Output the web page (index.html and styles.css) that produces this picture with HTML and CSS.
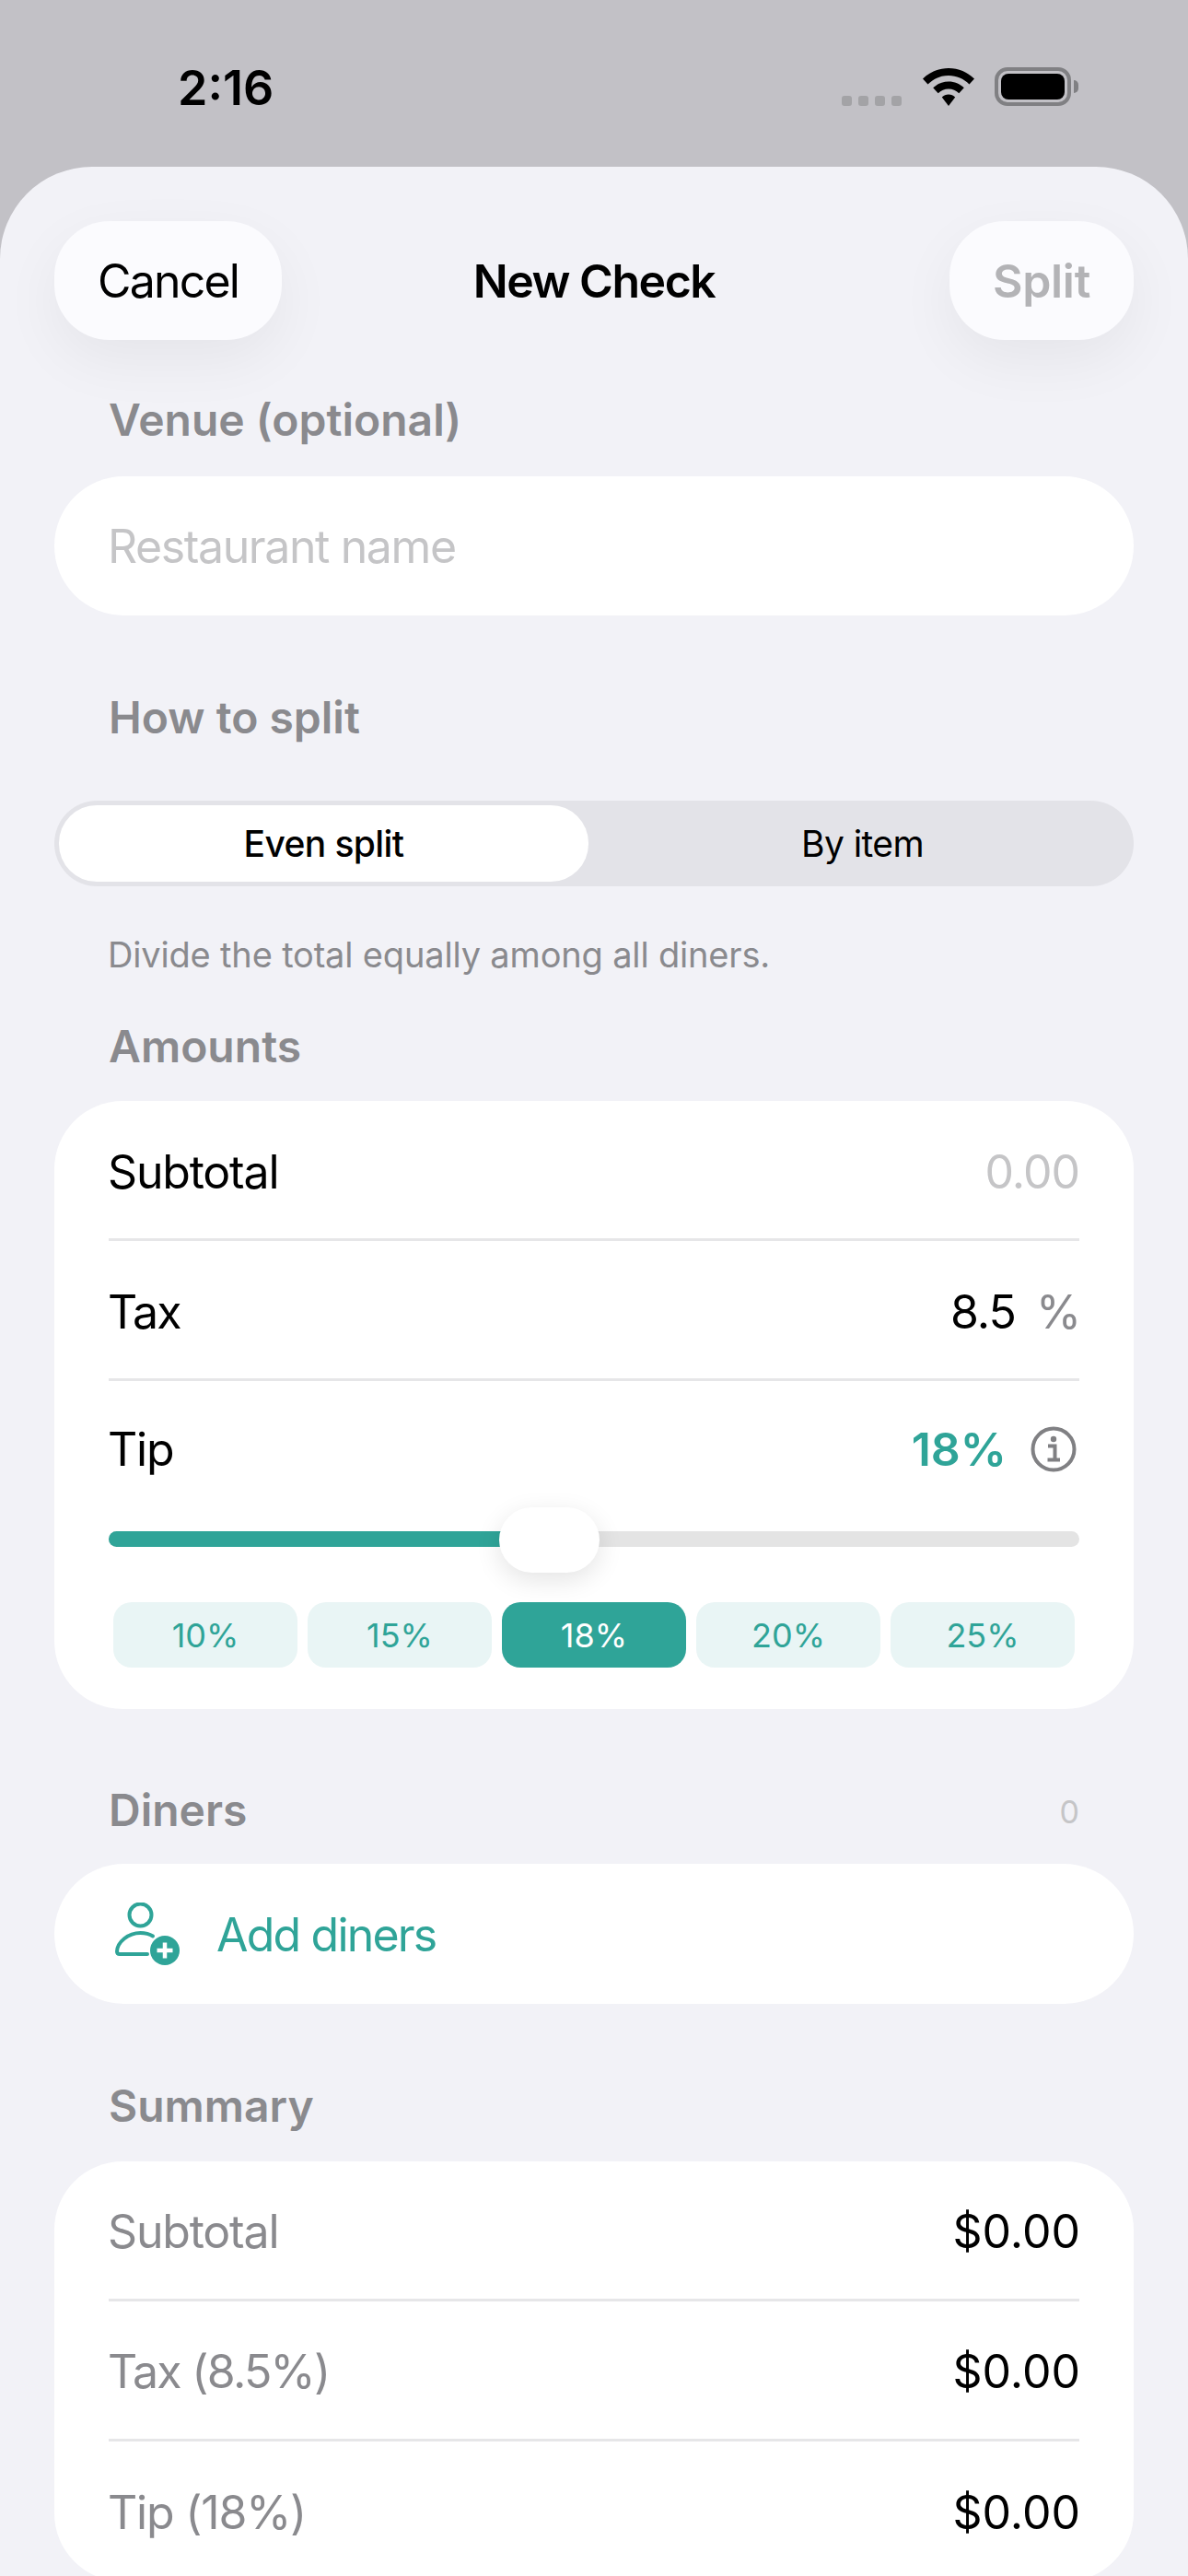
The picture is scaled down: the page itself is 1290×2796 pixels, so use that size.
FILE: index.html
```html
<!DOCTYPE html>
<html lang="en">
<head>
  <meta charset="UTF-8">
  <title>New Check</title>
  <link rel="stylesheet" href="styles.css">
</head>
<body>
<div class="status-bar">
  <div class="time">2:16</div>
  <div class="status-icons">
    <div class="signal"><span></span><span></span><span></span><span></span></div>
    <svg class="wifi" width="56" height="41" viewBox="0 0 56 41">
      <path d="M28 0C39 0 48.500 4.300 56 11.500L50.500 17.500C44.500 11.500 36.700 8 28 8C19.300 8 11.500 11.500 5.500 17.500L0 11.500C7.500 4.300 17 0 28 0Z"/>
      <path d="M28 14.500C34.500 14.500 40.300 17 44.800 21.300L39.300 27.200C36.200 24.200 32.300 22.500 28 22.500C23.700 22.500 19.800 24.200 16.700 27.200L11.200 21.300C15.700 17 21.500 14.500 28 14.500Z"/>
      <path d="M28 28.500C30.800 28.500 33.300 29.600 35.200 31.400L28 41L20.800 31.400C22.700 29.600 25.200 28.500 28 28.500Z"/>
    </svg>
    <div class="battery"><div class="battery-level"></div></div>
    <div class="battery-cap"></div>
  </div>
</div>

<div class="sheet">
  <div class="nav">
    <div class="nav-side"><button class="pill">Cancel</button></div>
    <div class="nav-title">New Check</div>
    <div class="nav-side right"><button class="pill disabled">Split</button></div>
  </div>

  <div class="label venue-label">Venue (optional)</div>
  <div class="field placeholder">Restaurant name</div>

  <div class="label section-gap">How to split</div>
  <div class="segmented">
    <div class="segment active">Even split</div>
    <div class="segment">By item</div>
  </div>
  <div class="hint">Divide the total equally among all diners.</div>

  <div class="label amounts-label">Amounts</div>
  <div class="card">
    <div class="row">
      <span>Subtotal</span>
      <span class="placeholder number">0.00</span>
    </div>
    <div class="row">
      <span class="tight">Tax</span>
      <span class="tax-value"><span class="number">8.5</span><span class="percent">%</span></span>
    </div>
    <div class="row tip-row">
      <span>Tip</span>
      <span class="tip-value">18%
        <svg class="info" width="50" height="50" viewBox="0 0 50 50">
          <circle cx="25" cy="25" r="22.500" fill="none" stroke="#808083" stroke-width="4"/>
          <circle cx="25" cy="14" r="3.200" fill="#808083"/>
          <path d="M19 21.500H26.500V36M18.500 36.500H32" fill="none" stroke="#808083" stroke-width="4"/>
        </svg>
      </span>
    </div>
    <div class="slider">
      <div class="slider-fill" style="width: 45%"></div>
      <div class="slider-thumb" style="left: 40.200%"></div>
    </div>
    <div class="chips">
      <div class="chip">10%</div>
      <div class="chip">15%</div>
      <div class="chip selected">18%</div>
      <div class="chip">20%</div>
      <div class="chip">25%</div>
    </div>
  </div>

  <div class="label-row">
    <div class="label">Diners</div>
    <div class="count">0</div>
  </div>
  <div class="field add-diners">
    <svg width="70" height="68" viewBox="0 0 70 68">
      <circle cx="27.500" cy="13.500" r="12" fill="none" stroke="#2fa498" stroke-width="4"/>
      <path d="M41 36.500C37 34 32.500 33 27.500 33C14 33 2.500 43 2 53C2 55 3 56 5 56H35" fill="none" stroke="#2fa498" stroke-width="4" stroke-linecap="round"/>
      <circle cx="54" cy="52" r="16" fill="#2fa498"/>
      <path d="M54 43.500V60.500M45.500 52H62.500" fill="none" stroke="#fff" stroke-width="4.500"/>
    </svg>
    <span>Add diners</span>
  </div>

  <div class="label section-gap">Summary</div>
  <div class="card summary">
    <div class="row"><span class="muted">Subtotal</span><span class="amount">$0.00</span></div>
    <div class="row"><span class="muted tight">Tax (8.5%)</span><span class="amount">$0.00</span></div>
    <div class="row"><span class="muted">Tip (18%)</span><span class="amount">$0.00</span></div>
  </div>
</div>
</body>
</html>
```

FILE: styles.css
```css
html, body {
  margin: 0;
  height: 2796px;
  overflow: hidden;
}

body {
  font-family: Inter, "Liberation Sans", sans-serif;
  background: #c2c1c6;
  color: #000;
  font-size: 50px;
  letter-spacing: -1.2px;
}

.status-bar {
  height: 181px;
  box-sizing: border-box;
  display: flex;
  justify-content: space-between;
  padding: 68px 119px 0 193px;
}

.time {
  font-size: 52px;
  font-weight: 600;
  line-height: 56px;
  letter-spacing: 0;
}

.status-icons {
  display: flex;
  align-items: flex-end;
  height: 43px;
  padding-top: 4px;
}

.signal {
  display: flex;
  gap: 7px;
  margin-right: 23px;
}

.signal span {
  width: 11px;
  height: 11px;
  border-radius: 3px;
  background: #a3a3a6;
}

.wifi {
  margin-right: 22px;
}

.battery {
  width: 83px;
  height: 42px;
  box-sizing: border-box;
  border: 4px solid #808083;
  border-radius: 14px;
  padding: 3px;
}

.battery-level {
  height: 100%;
  background: #000;
  border-radius: 8px;
}

.battery-cap {
  width: 5px;
  height: 14px;
  margin: 0 0 14px 3px;
  background: #808083;
  border-radius: 0 5px 5px 0;
}

.sheet {
  height: 2615px;
  box-sizing: border-box;
  background: #f2f2f7;
  border-radius: 100px 100px 0 0;
  padding: 59px 59px 0;
}

.nav {
  display: grid;
  grid-template-columns: 1fr auto 1fr;
  align-items: center;
}

.nav-side.right {
  text-align: right;
}

.pill {
  height: 129px;
  padding: 0 47px;
  border: none;
  border-radius: 60px;
  background: #fbfbfe;
  box-shadow: 0 22px 64px rgba(0, 0, 0, 0.055);
  font-family: inherit;
  font-size: 50px;
  letter-spacing: -1.8px;
  color: #000;
}

.pill.disabled {
  color: #b3b3b6;
  font-weight: 600;
  letter-spacing: -0.3px;
}

.nav-title {
  font-weight: 600;
  letter-spacing: -1.5px;
}

.label {
  font-size: 48px;
  font-weight: 600;
  line-height: 58px;
  padding-bottom: 2px;
  letter-spacing: 0;
  color: #8a8a8e;
  padding-left: 59px;
}

.venue-label {
  margin-top: 58px;
  margin-bottom: 30px;
}

.section-gap {
  margin-top: 82px;
  margin-bottom: 29px;
}

.amounts-label {
  margin-top: 48px;
  margin-bottom: 28px;
}

.field {
  height: 151px;
  background: #fff;
  border-radius: 76px;
  padding-left: 58px;
  display: flex;
  align-items: center;
}

.placeholder {
  color: #c5c5c7;
}

.field.placeholder {
  letter-spacing: -1.4px;
}

.segmented {
  height: 93px;
  box-sizing: border-box;
  margin-top: 59px;
  padding: 5px;
  background: #e3e3e8;
  border-radius: 47px;
  display: grid;
  grid-template-columns: 575px 1fr;
  font-size: 39px;
  letter-spacing: -0.6px;
}

.segment {
  display: flex;
  align-items: center;
  justify-content: center;
  padding-left: 8px;
  font-weight: 400;
}

.segment.active {
  padding-left: 0;
  background: #fff;
  border-radius: 41px;
  font-weight: 500;
}

.hint {
  margin-top: 51px;
  padding-left: 58px;
  font-size: 38px;
  line-height: 46px;
  letter-spacing: -0.17px;
  color: #8a8a8e;
}

.card {
  background: #fff;
  border-radius: 74px;
  padding: 0 59px;
}

.row {
  height: 152px;
  box-sizing: border-box;
  padding: 4px 0 0;
  display: flex;
  justify-content: space-between;
  align-items: center;
  border-bottom: 3px solid #e6e6e8;
}

.row > span:first-child {
  margin-left: -1px;
}

.card > .row:nth-last-child(1) {
  border-bottom: none;
}

.tight {
  letter-spacing: -1.7px;
}

.number {
  letter-spacing: -1px;
}

.amount {
  margin-right: -1px;
  letter-spacing: 0;
}

.summary .row {
  padding-top: 2px;
}

.tax-value {
  display: flex;
  align-items: baseline;
}

.percent {
  margin: 0 -2px 0 22px;
  letter-spacing: 0;
  color: #8a8a8e;
}

.tip-row {
  height: 150px;
  padding: 0 0 2px;
  border-bottom: none;
}

.tip-value {
  display: flex;
  align-items: center;
  gap: 26px;
  letter-spacing: 0;
  color: #2fa498;
  font-weight: 600;
}

.info {
  margin-right: 3px;
}

.slider {
  position: relative;
  height: 17px;
  margin-top: 13px;
  background: #e4e4e4;
  border-radius: 9px;
}

.slider-fill {
  height: 100%;
  background: #2fa498;
  border-radius: 9px;
}

.slider-thumb {
  position: absolute;
  top: -26px;
  width: 109px;
  height: 71px;
  background: #fff;
  border-radius: 36px;
  box-shadow: 0 8px 28px rgba(0, 0, 0, 0.11);
}

.chips {
  display: grid;
  grid-template-columns: repeat(5, 1fr);
  gap: 11px;
  margin-top: 60px;
  padding: 0 5px 45px;
}

.chip {
  height: 71px;
  display: flex;
  align-items: center;
  justify-content: center;
  background: #e9f5f5;
  border-radius: 20px;
  color: #2fa498;
  font-size: 36px;
  font-weight: 430;
  letter-spacing: 0;
}

.chip.selected {
  background: #2fa498;
  color: #fff;
}

.label-row {
  display: flex;
  justify-content: space-between;
  align-items: center;
  margin: 81px 0 27px;
}

.count {
  padding-right: 59px;
  font-size: 34px;
  letter-spacing: 0;
  color: #c5c5c7;
}

.add-diners {
  height: 152px;
  padding-left: 66px;
  gap: 40px;
  letter-spacing: -1.8px;
  color: #2fa498;
}

.add-diners span {
  padding-top: 2px;
}

.muted {
  color: #8a8a8e;
}
```
